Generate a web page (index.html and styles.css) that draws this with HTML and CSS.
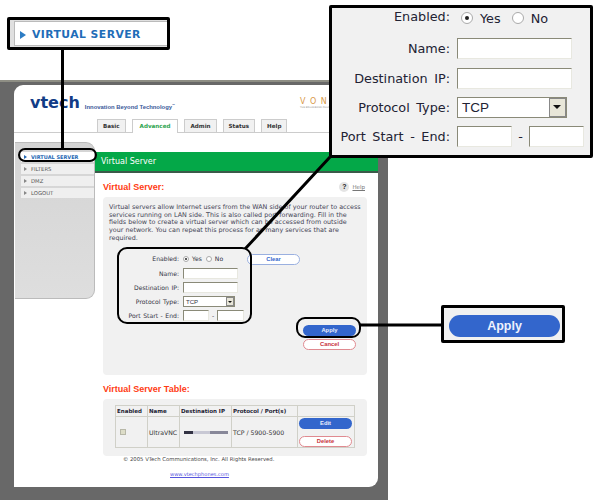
FILE: index.html
```html
<!DOCTYPE html>
<html lang="en">
<head>
<meta charset="utf-8">
<title>Virtual Server</title>
<link rel="stylesheet" href="styles.css">
</head>
<body>
<div class="stage">
  <div class="frame">
    <div class="card">
      <header class="head">
        <div class="brand">
          <span class="logo">vtech</span>
          <span class="tagline">Innovation Beyond Technology<sup>™</sup></span>
          <span class="von">V O N<small>THE BROADBAND PHONE</small></span>
        </div>
        <nav class="tabs">
          <span class="tab">Basic</span>
          <span class="tab tab-on">Advanced</span>
          <span class="tab">Admin</span>
          <span class="tab">Status</span>
          <span class="tab">Help</span>
        </nav>
      </header>
      <div class="body">
        <aside class="side">
          <a class="nav nav-on"><i class="tri"></i>VIRTUAL SERVER</a>
          <a class="nav"><i class="tri"></i>FILTERS</a>
          <a class="nav"><i class="tri"></i>DMZ</a>
          <a class="nav"><i class="tri"></i>LOGOUT</a>
        </aside>
        <main class="main">
          <div class="bar">Virtual Server</div>
          <div class="content">
            <div class="title-row">
              <h2 class="title">Virtual Server:</h2>
              <span class="help"><b class="q">?</b><u>Help</u></span>
            </div>
            <section class="panel panel-form">
              <p class="intro">Virtual servers allow Internet users from the WAN side of your router to access services running on LAN side. This is also called port forwarding. Fill in the fields below to create a virtual server which can be accessed from outside your network. You can repeat this process for as many services that are required.</p>
              <div class="form-row">
                <div class="grid small">
                  <label>Enabled:</label>
                  <div class="radios"><i class="radio on"></i><span>Yes</span><i class="radio"></i><span>No</span></div>
                  <label>Name:</label><i class="field"></i>
                  <label>Destination IP:</label><i class="field"></i>
                  <label>Protocol Type:</label>
                  <div class="select"><span>TCP</span><i class="arrow"></i></div>
                  <label>Port Start - End:</label>
                  <div class="ports"><i class="field"></i><span>-</span><i class="field"></i></div>
                </div>
                <span class="btn btn-line btn-clear">Clear</span>
              </div>
              <div class="actions">
                <span class="btn btn-blue">Apply</span>
                <span class="btn btn-red">Cancel</span>
              </div>
            </section>
            <h2 class="title title-table">Virtual Server Table:</h2>
            <section class="panel panel-table">
              <table class="vs">
                <thead>
                  <tr><th>Enabled</th><th>Name</th><th>Destination IP</th><th>Protocol / Port(s)</th><th></th></tr>
                </thead>
                <tbody>
                  <tr>
                    <td><i class="check"></i></td>
                    <td>UltraVNC</td>
                    <td><i class="redact"></i></td>
                    <td>TCP / 5900-5900</td>
                    <td class="ops"><span class="btn btn-blue">Edit</span><span class="btn btn-red">Delete</span></td>
                  </tr>
                </tbody>
              </table>
            </section>
            <p class="copy">© 2005 VTech Communications, Inc. All Rights Reserved.</p>
            <p class="link"><a>www.vtechphones.com</a></p>
          </div>
        </main>
      </div>
    </div>
  </div>

  <div class="mark">pcWinTech.com</div>

  <svg class="wires" width="600" height="500" viewBox="0 0 600 500" aria-hidden="true">
    <path d="M62.500 49V149M330 157L245 249M360 325H441" fill="none" stroke="#000" stroke-width="3"/>
  </svg>

  <div class="ring ring-nav"></div>
  <div class="ring ring-form"></div>
  <div class="ring ring-apply"></div>

  <div class="call call-nav"><div class="call-nav-in"><i class="tri big"></i>VIRTUAL SERVER</div></div>

  <div class="call call-form">
    <div class="grid large">
      <label>Enabled:</label>
      <div class="radios"><i class="radio on"></i><span>Yes</span><i class="radio"></i><span>No</span></div>
      <label>Name:</label><i class="field"></i>
      <label>Destination IP:</label><i class="field"></i>
      <label>Protocol Type:</label>
      <div class="select"><span>TCP</span><i class="arrow"></i></div>
      <label>Port Start - End:</label>
      <div class="ports"><i class="field"></i><span>-</span><i class="field"></i></div>
    </div>
  </div>

  <div class="call call-apply"><span class="apply-big">Apply</span></div>
</div>
</body>
</html>
```

FILE: styles.css
```css
* { box-sizing: border-box; }
html, body { margin: 0; padding: 0; background: #fff; }
i { display: block; font-style: normal; }
p, h2 { margin: 0; }

.stage {
  position: relative;
  width: 600px;
  height: 500px;
  overflow: hidden;
  font-family: "DejaVu Sans", Verdana, sans-serif;
  color: #223;
}

/* screenshot backdrop */
.frame {
  width: 388px;
  height: 420px;
  margin-top: 80px;
  padding: 5px 10px 13px 14px;
  background: #686868;
  border-top: 2px solid #8e8e84;
}
.card {
  height: 402px;
  margin-top: -2px;
  background: #fff;
  border-radius: 9px 0 9px 0;
  overflow: hidden;
}

/* header */
.head { height: 48px; border-bottom: 1px solid #ccc; display: flex; flex-direction: column; }
.brand { display: flex; align-items: flex-end; height: 34px; padding: 0 0 6px 16px; }
.logo { font: bold 16px/18px "DejaVu Sans", sans-serif; color: #123c86; }
.tagline { margin: 0 0 1px 5px; font: bold 5.900px/8px "Liberation Sans", sans-serif; color: #3b5a9a; }
.tagline sup { font-size: 3px; line-height: 0; }
.von { position: absolute; left: 300px; top: 97px; width: 32px; font: 8px/9px "DejaVu Sans", sans-serif; color: #d99a4a; letter-spacing: 1px; }
.von small { display: block; font-size: 2.500px; line-height: 3px; color: #999; letter-spacing: 0; white-space: nowrap; }
.tabs { display: flex; gap: 6px; padding-left: 83px; align-items: flex-end; height: 14px; }
.tab {
  height: 13px;
  padding: 0 5px;
  font: bold 5.600px/13px "DejaVu Sans", sans-serif;
  color: #333;
  background: #f1f1f1;
  border: 1px solid #ccc;
  border-bottom: 0;
}
.tab-on { height: 14px; margin-bottom: -1px; padding: 0 7px; background: #fff; color: #2da44e; }

/* body */
.body { display: flex; height: 354px; }
.side {
  width: 80px;
  height: 157px;
  margin: 9px 0 0 1px;
  padding: 9px 0 0 6px;
  display: flex;
  flex-direction: column;
  gap: 2px;
  background: linear-gradient(#d4d4d4, #dedede);
  border: 1px solid #bbb;
  border-left: 0;
  border-radius: 0 9px 9px 0;
}
.nav {
  display: flex;
  align-items: center;
  gap: 4px;
  height: 10px;
  padding-left: 3px;
  font: 5.300px/10px "DejaVu Sans", sans-serif;
  color: #555;
  background: #efefef;
}
.nav-on { font-weight: bold; color: #2468b4; background: #fff; font-size: 5px; }
.tri {
  width: 0;
  height: 0;
  border-left: 3px solid #888;
  border-top: 2px solid transparent;
  border-bottom: 2px solid transparent;
}
.nav-on .tri { border-left-color: #2468b4; }

.main { flex: 1; padding-top: 19px; min-width: 0; }
.bar {
  height: 21px;
  padding-left: 6px;
  font: 8px/19px "DejaVu Sans", sans-serif;
  color: #fff;
  background: #04a848;
  border-bottom: 2px solid #3b5a4a;
}
.content { padding: 7px 11px 0 8px; }
.title-row { display: flex; justify-content: space-between; align-items: center; height: 14px; }
.title { font: bold 9px/12px "Liberation Sans", Arial, sans-serif; color: #ff3c14; }
.help { display: flex; align-items: center; gap: 3px; font-size: 5.500px; color: #777; padding-right: 2px; }
.q { width: 10px; height: 10px; border-radius: 50%; background: #e4e4e4; color: #222; font: bold 7px/10px "Liberation Sans", sans-serif; text-align: center; }

.panel { background: #f1f1f1; border-radius: 4px; }
.panel-form { height: 178px; margin-top: 3px; padding: 7px 6px 0; }
.intro { font-size: 6.400px; line-height: 7.700px; color: #445; width: 253px; }

.form-row { display: flex; align-items: flex-start; margin-top: 10px; }
.grid { display: grid; justify-items: start; align-items: center; }
.grid label { justify-self: end; white-space: nowrap; }
.radios { display: flex; align-items: center; }
.radio { border-radius: 50%; background: #fff; border: 1px solid #aaa; position: relative; }
.radio.on::after { content: ""; position: absolute; border-radius: 50%; background: #222; }
.field { background: #fff; border-style: solid; border-color: #8a8a78 #e8e8e0 #e8e8e0 #8a8a78; border-width: 1px; }
.select { display: flex; align-items: center; justify-content: space-between; background: #fff; border: 1px solid #8a8a78; }
.arrow { position: relative; background: #e8e6d8; border: 1px solid #888; }
.arrow::after { content: ""; position: absolute; width: 0; height: 0; border-style: solid; border-color: #111 transparent transparent; }
.ports { display: flex; align-items: center; }

.small { grid-template-columns: 70px 56px; grid-template-rows: 12px repeat(4, 11px); column-gap: 4px; row-gap: 3px; width: 130px; font-size: 6.100px; word-spacing: .6px; color: #334; }
.small .radios { gap: 3px; }
.small .radio { width: 6px; height: 6px; }
.small .radio.on::after { left: 1px; top: 1px; width: 2px; height: 2px; }
.small .radios span + .radio { margin-left: 1px; }
.small .field { width: 55px; height: 11px; }
.small .select { width: 52px; height: 11px; padding-left: 2px; font-family: "Liberation Sans", sans-serif; }
.small .arrow { width: 8px; height: 9px; }
.small .arrow::after { left: 1px; top: 3px; border-width: 2px 2px 0; }
.small .ports { width: 72px; gap: 3px; }
.small .ports .field { width: 26px; }
.small .ports .field:last-child { width: 27px; }

.btn {
  display: block;
  width: 53px;
  height: 11px;
  border-radius: 6px;
  font: bold 5.800px/9px "Liberation Sans", sans-serif;
  text-align: center;
}
.btn-blue { background: #3366cc; color: #e8eefc; line-height: 11px; }
.btn-red { background: #fff; border: 1px solid #e08a90; color: #c8323c; }
.btn-line { background: #fff; border: 1px solid #9ab0e0; color: #3366cc; }
.btn-clear { margin: 1px 0 0 8px; }
.actions { display: flex; flex-direction: column; gap: 3px; align-items: flex-end; margin-top: 4px; padding-right: 5px; }

.title-table { margin-top: 8px; }
.panel-table { height: 57px; margin-top: 4px; padding: 6px 0 0 12px; }
.vs { border-collapse: collapse; width: 240px; font-size: 6.200px; color: #333; table-layout: fixed; background: #f1f1f1; }
.vs th, .vs td { border: 1px solid #d0d0c8; padding: 0 0 0 1px; }
.vs th { height: 11px; font-weight: bold; font-size: 5.500px; white-space: nowrap; color: #223; text-align: left; }
.vs td { height: 31px; }
.vs th:nth-child(1) { width: 32px; }
.vs th:nth-child(2) { width: 32px; }
.vs th:nth-child(3) { width: 52px; }
.vs th:nth-child(4) { width: 66px; }
.check { width: 6px; height: 6px; margin-left: 3px; background: #ddddc8; border: 1px solid #b8b8a8; }
.redact { width: 44px; height: 3px; margin-left: 3px; background: linear-gradient(90deg, #334 0 20%, #c8c8d4 20% 60%, #889 60%); }
.ops { padding: 0 !important; }
.ops .btn { margin: 1px 2px 7px 1px; }
.ops .btn:last-child { margin-bottom: 0; }

.copy { padding-left: 20px; font-size: 5.300px; line-height: 7px; color: #444; }
.link { margin-top: 8px; padding-left: 67px; font-size: 5.100px; line-height: 6px; color: #5555dd; text-decoration: underline; }

.mark { position: absolute; left: 68px; top: 187px; font: bold 32px/34px "Liberation Sans", sans-serif; color: rgba(0, 0, 0, .022); }

/* annotations */
.wires { position: absolute; left: 0; top: 0; }
.ring { position: absolute; border: 2px solid #000; }
.ring-nav { left: 18px; top: 148px; width: 79px; height: 14px; border-radius: 7px; }
.ring-form { left: 117px; top: 247px; width: 135px; height: 77px; border-radius: 10px; }
.ring-apply { left: 296px; top: 317px; width: 65px; height: 21px; border-radius: 9px; }

.call { position: absolute; border: 3px solid #000; border-radius: 2px; background: #f1f1f1; }
.call-nav { left: 7px; top: 17px; width: 163px; height: 33px; padding: 1px 0 0 4px; background: #e0e0e0; }
.call-nav-in {
  display: flex;
  align-items: center;
  gap: 6px;
  height: 25px;
  padding: 2px 0 0 5px;
  font: bold 10.800px/20px "DejaVu Sans", sans-serif;
  letter-spacing: .45px;
  color: #1f6db8;
  background: #fff;
  border: 1px solid #bbb;
  border-right: 0;
}
.tri.big { border-left: 6px solid #2c7cc4; border-top: 4px solid transparent; border-bottom: 4px solid transparent; }

.call-form { left: 329px; top: 5px; width: 264px; height: 153px; padding: 0; }
.large { grid-template-columns: 118px 114px; grid-template-rows: 25px 30px 30px 29px 29px; column-gap: 7px; width: 240px; font-size: 12.800px; word-spacing: 2.500px; color: #223; }
.large > label:first-child, .large > .radios { align-self: start; margin-top: 1px; }
.large .radios { word-spacing: 0; }
.large .radios .radio:first-child { margin-left: 4px; }
.large .radios span { margin: 2px 11px 0 7px; }
.large .radio { width: 12px; height: 12px; }
.large .radio.on::after { left: 3px; top: 3px; width: 4px; height: 4px; }
.large .field { width: 115px; height: 21px; }
.large .select { width: 110px; height: 21px; padding-left: 4px; font: 13.500px "Liberation Sans", sans-serif; }
.large .arrow { width: 17px; height: 19px; }
.large .arrow::after { left: 3px; top: 6px; border-width: 4px 4px 0; }
.large .ports { width: 127px; justify-content: space-between; }
.large .ports .field { width: 55px; }

.call-apply { left: 441px; top: 305px; width: 124px; height: 38px; padding: 7px 0 0 5px; }
.apply-big {
  display: block;
  width: 111px;
  height: 22px;
  border-radius: 11px;
  background: #3366cc;
  color: #eef2fc;
  font: bold 12.500px/22px "Liberation Sans", sans-serif;
  text-align: center;
}
```
